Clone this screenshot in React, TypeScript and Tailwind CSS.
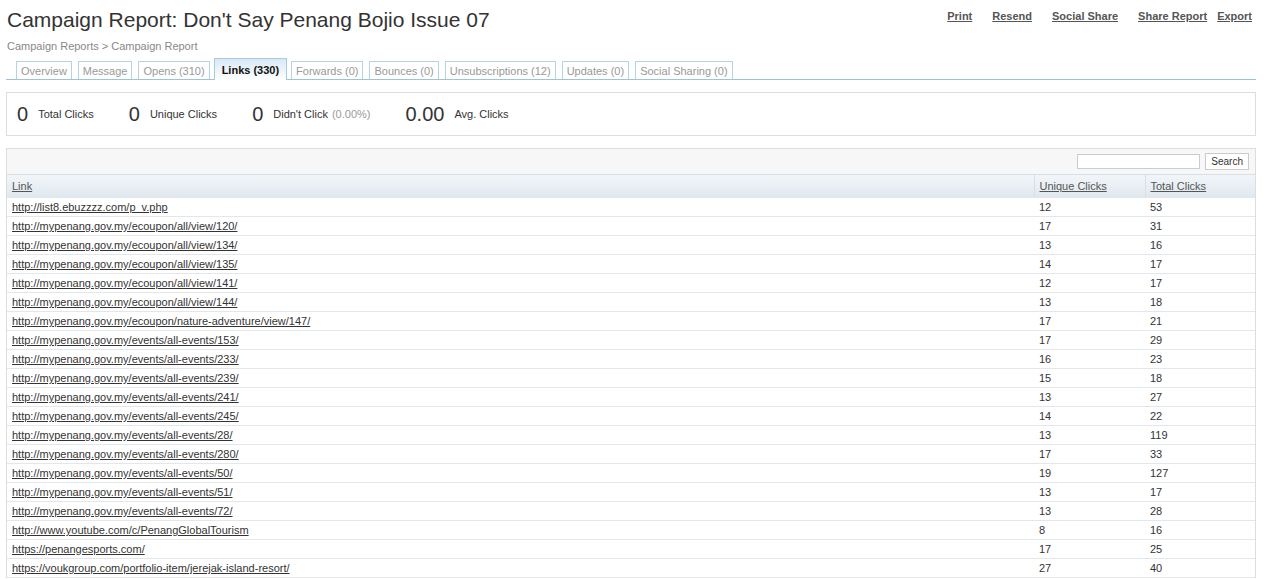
const tabs = [
  { label: "Overview", active: false },
  { label: "Message", active: false },
  { label: "Opens (310)", active: false },
  { label: "Links (330)", active: true },
  { label: "Forwards (0)", active: false },
  { label: "Bounces (0)", active: false },
  { label: "Unsubscriptions (12)", active: false },
  { label: "Updates (0)", active: false },
  { label: "Social Sharing (0)", active: false },
];

const actions = ["Print", "Resend", "Social Share", "Share Report", "Export"];

const stats = [
  { value: "0", label: "Total Clicks" },
  { value: "0", label: "Unique Clicks" },
  { value: "0", label: "Didn't Click", extra: "(0.00%)" },
  { value: "0.00", label: "Avg. Clicks" },
];

const links: [string, number, number][] = [
  ["http://list8.ebuzzzz.com/p_v.php", 12, 53],
  ["http://mypenang.gov.my/ecoupon/all/view/120/", 17, 31],
  ["http://mypenang.gov.my/ecoupon/all/view/134/", 13, 16],
  ["http://mypenang.gov.my/ecoupon/all/view/135/", 14, 17],
  ["http://mypenang.gov.my/ecoupon/all/view/141/", 12, 17],
  ["http://mypenang.gov.my/ecoupon/all/view/144/", 13, 18],
  ["http://mypenang.gov.my/ecoupon/nature-adventure/view/147/", 17, 21],
  ["http://mypenang.gov.my/events/all-events/153/", 17, 29],
  ["http://mypenang.gov.my/events/all-events/233/", 16, 23],
  ["http://mypenang.gov.my/events/all-events/239/", 15, 18],
  ["http://mypenang.gov.my/events/all-events/241/", 13, 27],
  ["http://mypenang.gov.my/events/all-events/245/", 14, 22],
  ["http://mypenang.gov.my/events/all-events/28/", 13, 119],
  ["http://mypenang.gov.my/events/all-events/280/", 17, 33],
  ["http://mypenang.gov.my/events/all-events/50/", 19, 127],
  ["http://mypenang.gov.my/events/all-events/51/", 13, 17],
  ["http://mypenang.gov.my/events/all-events/72/", 13, 28],
  ["http://www.youtube.com/c/PenangGlobalTourism", 8, 16],
  ["https://penangesports.com/", 17, 25],
  ["https://voukgroup.com/portfolio-item/jerejak-island-resort/", 27, 40],
];

export default function App() {
  return (
    <div className="w-[1276px] h-[579px] overflow-hidden bg-white font-['Liberation_Sans',Arial,sans-serif] text-[#333]">
      <div className="pl-[6px] pr-[20px]">
        {/* header */}
        <div className="flex items-start justify-between">
          <h1 className="pl-[1px] pt-[7px] text-[21px] leading-[26px] text-[#333]">
            Campaign Report: Don't Say Penang Bojio Issue 07
          </h1>
          <div className="flex pt-[9px] pr-[4px] text-[11px] font-bold leading-[14px] text-[#555]">
            {actions.map((a, i) => (
              <a
                key={a}
                href="#"
                className={`underline ${i === 0 ? "" : i === 4 ? "ml-[10px]" : "ml-[20px]"}`}
              >
                {a}
              </a>
            ))}
          </div>
        </div>
        <div className="pl-[1px] pt-[6px] text-[11px] leading-[14px] text-[#888]">
          Campaign Reports &gt; Campaign Report
        </div>

        {/* tabs */}
        <div className="mt-[5px] flex items-end gap-[6px] border-b border-[#9fc3d3] pl-[10px]">
          {tabs.map((t) =>
            t.active ? (
              <div
                key={t.label}
                className="-mx-[2px] -mb-px border border-b-0 border-[#a9cbe0] bg-gradient-to-b from-[#d7e9f5] to-white px-[7px] pt-[4px] pb-[3px] text-[11px] font-bold leading-[14px] text-[#111]"
              >
                {t.label}
              </div>
            ) : (
              <div
                key={t.label}
                className="border border-b-0 border-[#b4d3e3] px-[4px] pt-[2px] pb-[1px] text-[11px] leading-[14px] text-[#999]"
              >
                {t.label}
              </div>
            )
          )}
        </div>

        {/* stats */}
        <div className="mt-[12px] flex h-[44px] items-center border border-[#ddd] pl-[10px]">
          {stats.map((s) => (
            <div key={s.label} className="mr-[35px] flex items-center">
              <span className="text-[20px] font-light leading-none text-[#333]">{s.value}</span>
              <span className="ml-[10px] text-[11px] text-[#333]">
                {s.label}
                {s.extra && <span className="ml-[4px] text-[#999]">{s.extra}</span>}
              </span>
            </div>
          ))}
        </div>

        {/* links table */}
        <div className="mt-[12px] border-x border-t border-[#ddd]">
          <div className="flex h-[25px] items-center justify-end gap-[5px] bg-[#f7f7f7] pr-[6px]">
            <input className="h-[15px] w-[123px] border border-[#ccc] bg-white" />
            <button className="h-[17px] border border-[#ccc] bg-white px-[5px] text-[10px] leading-[14px] text-[#333]">
              Search
            </button>
          </div>
          <table className="w-full border-collapse text-[11px] leading-[14px]">
            <thead>
              <tr className="h-[23px] bg-gradient-to-b from-[#f2f6f9] to-[#dfe7ee] text-left text-[#555]">
                <th className="border-t border-[#d6dee6] pl-[5px] font-normal">
                  <a href="#" className="underline">Link</a>
                </th>
                <th className="w-[111px] border-l border-t border-[#d6dee6] pl-[5px] font-normal">
                  <a href="#" className="underline">Unique Clicks</a>
                </th>
                <th className="w-[110px] border-l border-t border-[#d6dee6] pl-[5px] font-normal">
                  <a href="#" className="underline">Total Clicks</a>
                </th>
              </tr>
            </thead>
            <tbody>
              {links.map(([url, unique, total]) => (
                <tr key={url} className="h-[19px] border-b border-[#e1e7ed]">
                  <td className="pl-[5px]">
                    <a href="#" className="text-[#333] underline">{url}</a>
                  </td>
                  <td className="pl-[5px]">{unique}</td>
                  <td className="pl-[5px]">{total}</td>
                </tr>
              ))}
            </tbody>
          </table>
        </div>
      </div>
    </div>
  );
}
